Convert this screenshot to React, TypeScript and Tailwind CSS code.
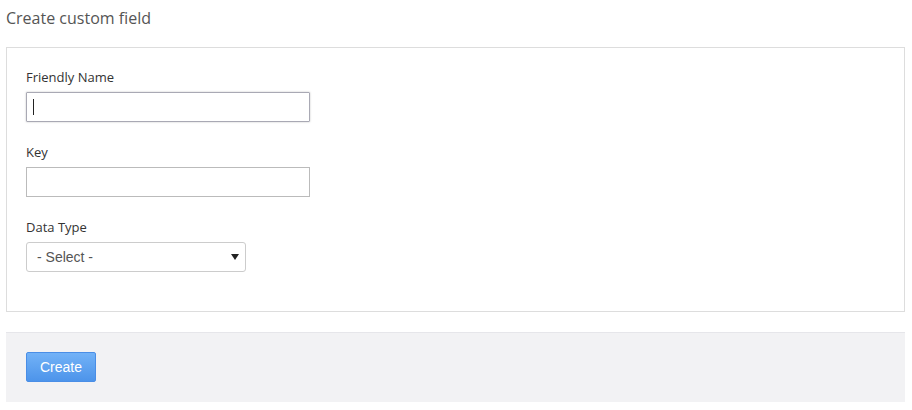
import React from 'react'

const font = { fontFamily: '"Open Sans", "Liberation Sans", sans-serif' }

function Field({ label, children }: { label: string; children: React.ReactNode }) {
  return (
    <div className="flex flex-col">
      <label className="text-[13px] leading-[18px] text-[#333] mb-[6px]">{label}</label>
      {children}
    </div>
  )
}

export default function App() {
  return (
    <div className="w-[912px] h-[410px] bg-white" style={font}>
      <div className="pl-[6px] pr-[7px] pt-[7px]">
        <h1 className="text-[16px] leading-[22px] text-[#555] font-normal">Create custom field</h1>

        <div className="mt-[18px] border border-[#ddd] px-[19px] pt-[20px] pb-[39px] flex flex-col gap-[21px]">
          <Field label="Friendly Name">
            <div className="w-[284px] h-[30px] border border-[#a9a9b4] rounded-[1px] shadow-[0_0_2px_rgba(0,0,0,0.25)] flex items-center pl-[6px]">
              <span className="w-px h-[16px] bg-[#222]" />
            </div>
          </Field>
          <Field label="Key">
            <input className="w-[284px] h-[30px] border border-[#bbb] outline-none px-2 text-[14px]" />
          </Field>
          <Field label="Data Type">
            <div className="w-[220px] h-[30px] border border-[#ccc] rounded-[3px] flex items-center justify-between pl-[10px] pr-[6px]">
              <span className="text-[14px] text-[#555]" style={{ fontFamily: '"Liberation Sans", Arial, sans-serif' }}>- Select -</span>
              <svg width="8" height="6" viewBox="0 0 8 6"><path d="M0 0h8L4 6z" fill="#222" /></svg>
            </div>
          </Field>
        </div>

        <div className="mt-[20px] h-[70px] bg-[#f2f2f4] border-t border-[#e6e6ea] pl-[20px] pt-[19px]">
          <button
            className="w-[70px] h-[30px] rounded-[2px] border border-[#4a8ee6] bg-gradient-to-b from-[#72b2f7] to-[#4d94ea] text-white text-[14px]"
            style={{ fontFamily: '"Liberation Sans", Arial, sans-serif' }}
          >
            Create
          </button>
        </div>
      </div>
    </div>
  )
}
